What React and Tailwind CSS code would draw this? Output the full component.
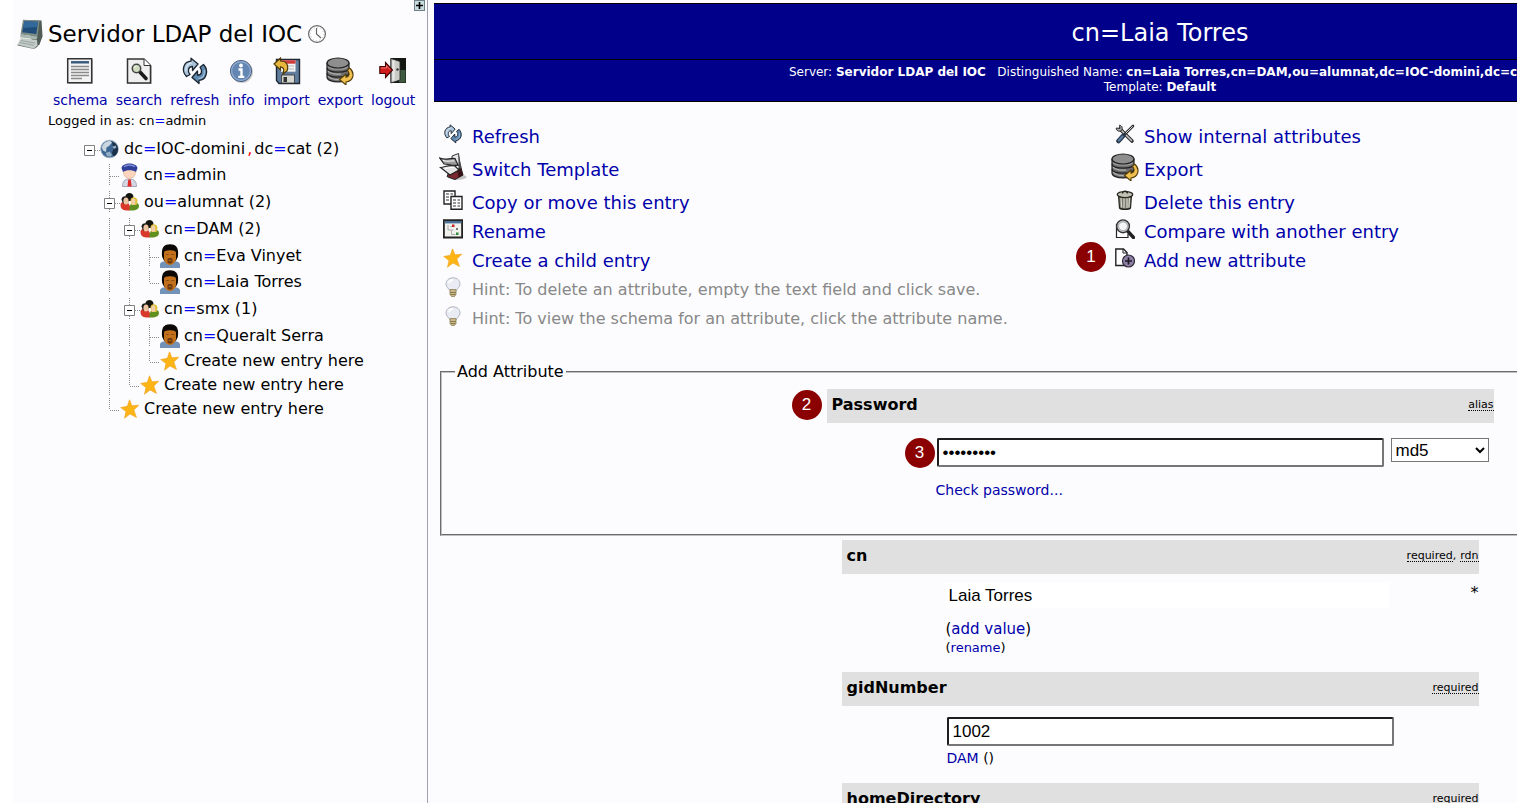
import { Fragment } from 'react';

const FONT = "font-['DejaVu_Sans',Verdana,sans-serif]";
const LINK = 'text-[#0000aa] hover:text-[#0066cc]';

/* ---------- icons ---------- */

const ComputerIcon = () => (
  <svg viewBox="0 0 26 30" className="w-[26px] h-[30px] shrink-0">
    <path d="M8 1 24.500 1.500l1 16-3 8-5 4z" fill="#505c56" />
    <path d="M6 .8 22.500 1.500 20.500 17.500 3.500 15.500z" fill="#7d8c86" />
    <path d="M7.300 2.200 21 2.800 19.300 15 5.200 13.300z" fill="#1f4c78" />
    <path d="M7.300 2.200 21 2.800 20.300 8 6.300 9z" fill="#33689a" />
    <path d="M3.500 15.500 20.500 17.500 19.500 20.500 3 18.300z" fill="#a9b5af" />
    <path d="M4 19 20 21 20.500 26.500 17 29.500 .5 25.500z" fill="#c3ccc8" />
    <path d="M.5 25.500 17 29.500 20.500 26.500v1.200L17 30 .5 26.500z" fill="#69766f" />
    <path d="M3.500 21.500 18 24M2.500 23.500l14.500 2.800" stroke="#8f9a95" strokeWidth=".8" />
  </svg>
);

const ClockIcon = () => (
  <svg viewBox="0 0 20 20" className="w-5 h-5" fill="none">
    <circle cx="10" cy="10" r="8.400" fill="#fff" stroke="#666" strokeWidth="1.200" />
    <circle cx="10" cy="10" r="6.600" stroke="#bbb" strokeWidth="1" strokeDasharray="1 2.450" />
    <path d="M9.500 4v6l4.500 4" stroke="#666" strokeWidth="1.200" />
  </svg>
);

const SchemaIcon = () => (
  <svg viewBox="0 0 28 28" className="w-7 h-7">
    <path d="M3 3h24v24H3z" fill="#ccc" />
    <path d="M1.700 1.700h24v24h-24z" fill="#f3f3f3" stroke="#333" strokeWidth="1.500" />
    <path d="M5 5.300h18" stroke="#37597b" strokeWidth="2.400" />
    <path d="M5 9.500h18M5 12.500h18M5 15.500h18M5 18.500h18M5 21.500h11" stroke="#8a8a8a" strokeWidth="1.300" />
  </svg>
);

const SearchIcon = () => (
  <svg viewBox="0 0 28 28" className="w-7 h-7">
    <path d="M4 3h17l6 6v18H4z" fill="#ccc" />
    <path d="M2.500 2h16.500l6.500 6.500V26h-23z" fill="#efefef" stroke="#333" strokeWidth="1.500" />
    <path d="M19 2v6.500h6.500" fill="#fff" stroke="#333" />
    <path d="m14.500 14.500 6.500 7" stroke="#1a1a1a" strokeWidth="3.600" strokeLinecap="round" />
    <circle cx="11.500" cy="11.500" r="4.200" fill="#d0dcc0" stroke="#444" strokeWidth="1.500" />
    <path d="M9.500 11c.2-1.300 1-1.800 2-1.800" stroke="#fff" fill="none" />
  </svg>
);

// two arrows chasing each other, the left one points right and up top
const RefreshIcon = ({ className = 'w-7 h-7' }) => (
  <svg viewBox="0 0 28 28" className={className}>
    <g stroke="#1b2530" strokeWidth="1.300" strokeLinejoin="round">
      <path
        d="M5.500 19.500C-.5 13 3 4.500 10 4.200V1.200l7 5.800-5.500 6.500V9.500c-4 0-5.500 4-2.500 8z"
        fill="#a9c3db"
      />
      <path
        d="M22.500 7.500C28.500 14 25 23 18 23.300v3.200L11 20.500l5.500-6.500v4.200c4 0 5.500-4 2.500-8z"
        fill="#5f89b0"
      />
    </g>
    <path d="M4.800 14.500c-.5-5 2.500-8.500 6-8.700" fill="none" stroke="#dbe7f1" strokeWidth="1.200" />
    <path d="M23.300 13c.5 5-1.500 8.200-5.800 8.700" fill="none" stroke="#9dbbd6" strokeWidth="1.200" />
  </svg>
);

const InfoIcon = () => (
  <svg viewBox="0 0 28 28" className="w-7 h-7">
    <circle cx="15" cy="15" r="11" fill="#ccc" />
    <circle cx="14" cy="14" r="10.600" fill="#6486b3" stroke="#4d6385" />
    <circle cx="14" cy="14" r="9.400" fill="none" stroke="#94aed0" strokeWidth="1.200" />
    <circle cx="14" cy="8.500" r="1.900" fill="#fff" />
    <path d="M11.500 12.500h3v7M11.300 19.800h6" stroke="#fff" strokeWidth="2.300" fill="none" />
  </svg>
);

const ImportIcon = () => (
  <svg viewBox="0 0 28 28" className="w-7 h-7">
    <path d="M3.500 2.500h23v24H6l-2.500-3z" fill="#607d9d" stroke="#1c2733" strokeWidth="1.400" />
    <path d="M8 3.200h14.500v11.500H8z" fill="#f5f5f5" />
    <path d="M8 3.200h14.500v3.500H8z" fill="#cf3b3b" />
    <path d="M10 9h11M10 12h11" stroke="#b5b5b5" />
    <path d="M8.500 18h13v8h-13z" fill="#d6d6d0" stroke="#333" strokeWidth=".8" />
    <path d="M10.500 20h3.500v5h-3.500z" fill="#333" />
    <path
      d="M1 7 7.500 1v3c6 0 8.500 4 6.500 10l-4 3c1.500-4.500.5-7-2.500-7.200V13z"
      fill="#e8b63c"
      stroke="#4d3a09"
      strokeWidth="1.200"
    />
  </svg>
);

const ExportIcon = () => (
  <svg viewBox="0 0 28 28" className="w-7 h-7">
    <path d="M1 6v14c0 6.500 22 6.500 22 0V6z" fill="#6f6f6f" stroke="#222" strokeWidth="1.200" />
    <path d="M2 9.500c3 3.500 17 3.500 20 0" fill="none" stroke="#9a9a9a" strokeWidth="1.200" />
    <path d="M1 11c0 5.500 22 5.500 22 0M1 16c0 5.500 22 5.500 22 0" fill="none" stroke="#222" strokeWidth="1.200" />
    <path d="M2 14c2 3 10 3.500 13 3M2 19c2 3 8 3.800 11 3.500" fill="none" stroke="#b0b0b0" strokeWidth="1.200" />
    <ellipse cx="12" cy="6" rx="11" ry="5" fill="#8e8e8e" stroke="#222" strokeWidth="1.200" />
    <path
      d="M23.500 11c6 5 4 13-3.500 14V28l-6.500-5.500L20 17v3.300c3.500-.5 4-4 1.500-7z"
      fill="#f0c14f"
      stroke="#543e09"
      strokeWidth="1.100"
    />
  </svg>
);

const LogoutIcon = () => (
  <svg viewBox="0 0 28 28" className="w-7 h-7">
    <path d="M11.500 1H27v25H11.500z" fill="#131813" />
    <path d="M20 13h6.500v12.500H20z" fill="#3f5a40" />
    <path d="M12 1.500 21 4.500v18.500l-9 3z" fill="#c9cbc7" stroke="#222" strokeWidth=".8" />
    <path d="M14.500 3.500v20" stroke="#e9e9e9" strokeWidth="2.200" />
    <circle cx="18.500" cy="12.500" r="1.200" fill="#333" />
    <path d="M.8 9.500h5.700V5.500l7 7.500-7 7.500v-4H.8z" fill="#cf1c1c" stroke="#420606" strokeWidth="1.100" />
    <path d="M2 11h5.500V8.500l3.500 4" stroke="#f07070" fill="none" />
  </svg>
);

const TemplateIcon = () => (
  <svg viewBox="0 0 28 28" className="w-7 h-7">
    <ellipse cx="18" cy="24" rx="9.500" ry="3" fill="#c4c4c4" />
    <path d="m10 19 12-4 2 7-8 4.500-8-3z" fill="#7d2730" stroke="#222" />
    <path d="m18 17 4-2 2 7-4.500 2.500z" fill="#3a1418" />
    <path d="m13 3 6.500-2.500L21 12l-8 1.500z" fill="#e8e8e8" stroke="#333" />
    <path d="M19.500.5 22 12l1 4-3.500-1z" fill="#4a4a4a" />
    <path d="M.8 5c6 2.500 9 0 15.200.5l3 6.500c-5 1.500-9-1-14-1z" fill="#999" stroke="#222" strokeWidth="1.200" />
    <path d="M1.500 14.500c5-.5 8-3 14.500-1.500l4 4-9 5z" fill="#e5e5e5" stroke="#222" strokeWidth="1.200" />
    <path d="M4 7.500c5 1.500 8 0 11.500.5M6 15.500c4-.5 6-1.500 9-1" stroke="#fff" fill="none" />
  </svg>
);

const CopyIcon = () => (
  <svg viewBox="0 0 20 20" className="w-5 h-5">
    <path d="M1 1h11v13H1z" fill="#fff" stroke="#222" strokeWidth="1.400" />
    <path d="M3 4h3M7.500 4H10M3 7h3M3 10h3" stroke="#333" strokeWidth="1.200" />
    <path d="M8 6.500h11v12.800H8z" fill="#fff" stroke="#222" strokeWidth="1.400" />
    <path d="M10 10h3M14.500 10H17M10 13h3M14.500 13H17M10 16h3M14.500 16H17" stroke="#333" strokeWidth="1.200" />
  </svg>
);

const RenameIcon = () => (
  <svg viewBox="0 0 20 20" className="w-5 h-5">
    <path d="M.9 1.200h18.200v17.300H.9z" fill="#f1f1ee" stroke="#222" strokeWidth="1.800" />
    <path d="M1.800 2h16.400v2.400H1.800z" fill="#4d7297" />
    <path d="M5 6v5h5.500M7.500 7.500h3M8.500 11.500v4h4" stroke="#aaa" fill="none" />
    <path d="M9 5.500h2.500V8H9z" fill="#cc2222" />
    <path d="M13 13.500h2.500V16H13z" fill="#2e8b38" />
    <path d="M13 9h2v2h-2z" fill="#777" />
  </svg>
);

const StarIcon = () => (
  <svg viewBox="0 0 20 20" className="w-5 h-5">
    <path
      d="m9.500.8 2.500 6 6.800-.6-5 4.800 2.700 7.500-6.500-3.500-5.500 4.300 1.500-6.800L.7 8.500l6.600-1.200z"
      fill="#fdb515"
      stroke="#f0a020"
      strokeWidth=".6"
    />
  </svg>
);

const BulbIcon = () => (
  <svg viewBox="0 0 20 20" className="w-5 h-5">
    <path
      d="M10 .8C5.500.8 3 3.800 3 7c0 3 3 4.500 3.800 7h6.400C14 11.500 17 10 17 7c0-3.200-2.500-6.200-7-6.200z"
      fill="#e9ecf2"
      stroke="#b3b6c0"
    />
    <path d="M6 6c.5-2 2-3.200 4-3.200" stroke="#fff" strokeWidth="1.800" fill="none" />
    <path d="M7 12.500h6v5L11.500 19.500h-3L7 17.500z" fill="#c9b98a" stroke="#8f8158" strokeWidth=".8" />
    <path d="M7 15.500h6M7.500 17.500h5" stroke="#857547" strokeWidth=".9" />
  </svg>
);

const ToolsIcon = () => (
  <svg viewBox="0 0 20 20" className="w-5 h-5" strokeLinecap="round">
    <path d="M5 5 17 17" stroke="#2b2b2b" strokeWidth="3.600" />
    <path d="M5 5 16.500 16.500" stroke="#c4c4c4" strokeWidth="1.600" />
    <path d="M1.200 4.500C1.500 7 4 8 6.500 6.500 8 4 7 1.500 4.500 1.200L5 4z" fill="#aaa" stroke="#2b2b2b" />
    <path d="M18 2 9.500 10.500" stroke="#2b2b2b" strokeWidth="2.600" />
    <path d="M17.500 2.500 11 9" stroke="#ddd" strokeWidth="1" />
    <path d="M8 12 3.500 17" stroke="#26384c" strokeWidth="4.600" />
    <path d="M7.500 12.500 3.800 16.500" stroke="#5b7ea3" strokeWidth="2.200" />
  </svg>
);

const TrashIcon = () => (
  <svg viewBox="0 0 20 20" className="w-5 h-5">
    <path d="m3.500 5 1 13c1.500 1.800 9.500 1.800 11 0l1-13z" fill="#7a7a70" stroke="#24241f" strokeWidth="1.200" />
    <path d="m6 8 .6 9.500M9 8.500V18M12 8.500V18M14.500 8l-.6 9.500" stroke="#d3d3c8" strokeWidth="1.300" />
    <ellipse cx="10" cy="4.500" rx="7.800" ry="3" fill="#c2c2b4" stroke="#24241f" strokeWidth="1.200" />
    <path d="M7.500 3.600c0-3.200 5-3.200 5 0" fill="none" stroke="#24241f" strokeWidth="1.400" />
  </svg>
);

const CompareIcon = () => (
  <svg viewBox="0 0 20 20" className="w-5 h-5">
    <path d="M1.500 5v13.500h11.500V15" fill="#fff" stroke="#222" strokeWidth="1.200" />
    <path d="m13 12.500 5.500 6" stroke="#222" strokeWidth="3.400" strokeLinecap="round" />
    <circle cx="8" cy="7.300" r="6.400" fill="#c9cdd0" stroke="#333" strokeWidth="1.400" />
    <circle cx="8" cy="7.300" r="4.400" fill="#f5f6f7" stroke="#999" strokeWidth=".8" />
  </svg>
);

const AddAttrIcon = () => (
  <svg viewBox="0 0 20 20" className="w-5 h-5">
    <path d="M.8 1h7.700L12 4.500v13H.8z" fill="#fff" stroke="#222" strokeWidth="1.400" />
    <path d="M8 1v4h4" fill="none" stroke="#222" />
    <circle cx="13.500" cy="13" r="6" fill="#8d7fa5" stroke="#2f2a38" strokeWidth="1.200" />
    <path d="M13.500 9.500v7M10 13h7" stroke="#1c1822" strokeWidth="1.700" />
  </svg>
);

const GlobeIcon = () => (
  <svg viewBox="0 0 20 20" className="w-5 h-5">
    <circle cx="9.500" cy="10" r="8.800" fill="#3c6593" stroke="#a5b3c2" />
    <path d="M2 9c0-4 4-7 8-7.200l2 2L9 7l-2.500 1.500L6 13l-3-1.500z" fill="#c8d6df" />
    <path d="M12 3c4 1 6 4 6 7.500s-2 6-4.500 7L12 14l1.500-4z" fill="#1b3049" />
    <path d="m12.500 7.500 3-1 1 2-2.500 1.500zM5.500 14l4-1.500 2.500 3-1.500 2.300-3.500-.8z" fill="#93adc2" />
  </svg>
);

const AdminIcon = () => (
  <svg viewBox="0 0 20 24" className="w-5 h-6">
    <path d="M2.500 23.500c0-5 2-7.500 7-7.500s7 2.500 7 7.500z" fill="#d4d6e4" stroke="#a5a8bd" />
    <path d="M8.300 16.500h2.400l1 7H7.500z" fill="#e02b2b" />
    <circle cx="9.500" cy="9.500" r="6" fill="#fbd5bd" stroke="#e0b196" strokeWidth=".7" />
    <path d="M1.500 5c1-6 15-6 16 0L16 9c-3-2.500-10-2.500-13 0z" fill="#303f9a" />
    <path d="M4 3.800c3-2.500 8-2.500 11 0" stroke="#7d8ed4" strokeWidth="1.400" fill="none" />
  </svg>
);

const GroupIcon = () => (
  <svg viewBox="0 0 20 20" className="w-5 h-5">
    <path d="M5.500 5c-.5-5 8-5.500 8 0l-2 4h-5z" fill="#15150f" />
    <path d="M.5 13c0-3 3-3.500 5.500-3s5 4 4 8.500C5 19 .5 18 .5 13z" fill="#d8392b" />
    <path d="M9.500 18.500c0-5 1-7.500 4-8s5.500 1 5.500 3.500c0 3-3 5-9.500 4.500z" fill="#5f8f1e" />
    <path d="M1.500 7.500c0-4.500 7-4.500 7.500 0l-1 4h-5z" fill="#1b1b1b" />
    <ellipse cx="6" cy="9" rx="2.600" ry="3.500" fill="#eec5a2" />
    <path d="M10.500 8.500c0-4.500 7-4.500 7 .5l-1 4h-5z" fill="#e0c23a" />
    <ellipse cx="13.300" cy="9.800" rx="2" ry="3.200" fill="#f2cfae" />
  </svg>
);

const PersonIcon = () => (
  <svg viewBox="0 0 20 24" className="w-5 h-6">
    <path d="M0 24v-4c1-2.500 4-2.500 6-3h8c2 .5 5 .5 6 3v4z" fill="#7392b8" />
    <path d="M2.200 13C1 5 3 .3 10 .3S19 5 17.800 13l-2 4H4.200z" fill="#0c0805" />
    <path d="M4 8.500c0-3 12-3 12 0v6c0 3.500-3 6.500-6 6.500s-6-3-6-6.500z" fill="#c2701b" />
    <path d="M7.500 15c0-1.200 5-1.200 5 0v3.500c-1 1.500-4 1.500-5 0z" fill="#6b3a10" />
    <path d="M8.800 16.500h2.400" stroke="#b3651a" strokeWidth="1.200" />
    <path d="M5.800 10.500h3M11.200 10.500h3" stroke="#8a4d14" />
  </svg>
);

/* ---------- tree ---------- */

const DASH = { stroke: '#888', strokeWidth: 1, strokeDasharray: '1 1', fill: 'none' };

// one 20px wide column of the tree: blank, line, tee, elbow, or a collapse box
const Branch = ({ type }) => (
  <svg viewBox="0 0 20 22" className="w-5 h-[22px] shrink-0">
    {(type === 'line' || type === 'tee' || type === 'box') && <path d="M9.500 0v22" {...DASH} />}
    {type === 'elbow' && <path d="M9.500 0v12" {...DASH} />}
    {(type === 'tee' || type === 'elbow') && <path d="M10 12.500h9" {...DASH} />}
    {(type === 'box' || type === 'root') && (
      <>
        <path d="M15 12.500h5" {...DASH} />
        <path d="M4.500 7.500h10v10h-10z" fill="#fff" stroke="#808080" />
        <path d="M7 12.500h5" stroke="#000" />
      </>
    )}
  </svg>
);

const tree = [
  { cols: ['root'], icon: GlobeIcon, dn: [['dc', 'IOC-domini'], ['dc', 'cat']], count: 2, h: 'h-[27px]' },
  { cols: ['blank', 'tee'], icon: AdminIcon, dn: [['cn', 'admin']], h: 'h-[26px]' },
  { cols: ['blank', 'box'], icon: GroupIcon, dn: [['ou', 'alumnat']], count: 2, h: 'h-[27px]' },
  { cols: ['blank', 'line', 'box'], icon: GroupIcon, dn: [['cn', 'DAM']], count: 2, h: 'h-[27px]' },
  { cols: ['blank', 'line', 'line', 'tee'], icon: PersonIcon, dn: [['cn', 'Eva Vinyet']], h: 'h-[27px]' },
  { cols: ['blank', 'line', 'line', 'elbow'], icon: PersonIcon, dn: [['cn', 'Laia Torres']], h: 'h-[26px]' },
  { cols: ['blank', 'line', 'box'], icon: GroupIcon, dn: [['cn', 'smx']], count: 1, h: 'h-[27px]' },
  { cols: ['blank', 'line', 'line', 'tee'], icon: PersonIcon, dn: [['cn', 'Queralt Serra']], h: 'h-[27px]' },
  { cols: ['blank', 'line', 'line', 'elbow'], icon: StarIcon, h: 'h-6' },
  { cols: ['blank', 'line', 'elbow'], icon: StarIcon, h: 'h-6' },
  { cols: ['blank', 'elbow'], icon: StarIcon, h: 'h-6' },
];

const TreeRow = ({ cols, icon: Icon, dn, count, h }) => (
  <li className={`flex items-center ${h}`}>
    {cols.map((type, i) => (
      <Branch key={i} type={type} />
    ))}
    <Icon />
    <a href="#" className="ml-1 text-base leading-5 whitespace-nowrap">
      {dn
        ? dn.map(([attr, value], i) => (
            <Fragment key={i}>
              {i > 0 && <span className="text-[#ff0000] mx-[2px]">,</span>}
              {attr}
              <span className="text-[#0000ff]">=</span>
              {value}
            </Fragment>
          ))
        : 'Create new entry here'}
      {count && ` (${count})`}
    </a>
  </li>
);

/* ---------- sidebar ---------- */

const tools = [
  ['schema', SchemaIcon],
  ['search', SearchIcon],
  ['refresh', RefreshIcon],
  ['info', InfoIcon],
  ['import', ImportIcon],
  ['export', ExportIcon],
  ['logout', LogoutIcon],
];

const Sidebar = () => (
  <aside className="relative w-[415px] shrink-0 border-r border-[#a0a0b4]">
    <button
      aria-label="Expand"
      className="absolute top-0 right-[2px] w-[11px] h-[11px] bg-[#c8dce0] border border-[#6f7f86] flex items-center justify-center"
    >
      <svg viewBox="0 0 9 9" className="w-[9px] h-[9px]">
        <path d="M4.500 1v7M1 4.500h7" stroke="#000" strokeWidth="1.600" />
      </svg>
    </button>
    <div className="flex items-center gap-[5px] pl-1 pt-[19px]">
      <ComputerIcon />
      <h1 className="text-[23px] leading-[30px] whitespace-nowrap">Servidor LDAP del IOC</h1>
      <ClockIcon />
    </div>
    <nav className="flex gap-2 pl-10 mt-2">
      {tools.map(([name, Icon]) => (
        <a key={name} href="#" className={`flex flex-col items-center gap-[5px] text-sm leading-5 ${LINK}`}>
          <Icon />
          {name}
        </a>
      ))}
    </nav>
    <p className="pl-[35px] text-[13px] leading-5 pt-[1px]">
      Logged in as: cn<span className="text-[#0000ff]">=</span>admin
    </p>
    <ul className="pl-[67px] pt-1">
      {tree.map((row, i) => (
        <TreeRow key={i} {...row} />
      ))}
    </ul>
  </aside>
);

/* ---------- main panel ---------- */

const Badge = ({ n, className }) => (
  <span
    className={`absolute w-[30px] h-[30px] rounded-full bg-[#8b0000] text-white text-[17px] flex items-center justify-center font-['Liberation_Sans',sans-serif] ${className}`}
  >
    {n}
  </span>
);

const SmallRefresh = () => <RefreshIcon className="w-5 h-5" />;

const actions = [
  [{ icon: SmallRefresh, text: 'Refresh' }, { icon: ToolsIcon, text: 'Show internal attributes' }],
  [{ icon: TemplateIcon, text: 'Switch Template' }, { icon: ExportIcon, text: 'Export' }],
  [{ icon: CopyIcon, text: 'Copy or move this entry' }, { icon: TrashIcon, text: 'Delete this entry' }],
  [{ icon: RenameIcon, text: 'Rename' }, { icon: CompareIcon, text: 'Compare with another entry' }],
  [{ icon: StarIcon, text: 'Create a child entry' }, { icon: AddAttrIcon, text: 'Add new attribute', badge: 1 }],
];

const hints = [
  'Hint: To delete an attribute, empty the text field and click save.',
  'Hint: To view the schema for an attribute, click the attribute name.',
];

const Action = ({ icon: Icon, text, badge }) => (
  <div className="relative flex items-center flex-1">
    {badge && <Badge n={badge} className="-left-[34px] top-[-4px]" />}
    <span className="w-[30px] mr-1 flex justify-center pb-[5px]">
      <Icon />
    </span>
    <a href="#" className={`text-lg leading-[29px] whitespace-nowrap ${LINK}`}>
      {text}
    </a>
  </div>
);

const Note = ({ children }) => (
  <abbr className="no-underline border-b border-dotted border-black leading-none">{children}</abbr>
);

const AttrHeader = ({ name, notes, htmlFor }) => (
  <div className="flex items-center justify-between bg-[#e0e0e0] h-[34px] pl-[5px] pb-[2px]">
    <label htmlFor={htmlFor} className="text-base leading-5 font-bold">
      {name}
    </label>
    <span className="text-[11px] flex">
      {notes.map((note, i) => (
        <Fragment key={note}>
          {i > 0 && <span className="leading-none mr-1">,</span>}
          <Note>{note}</Note>
        </Fragment>
      ))}
    </span>
  </div>
);

const INPUT =
  "w-[447px] h-[29px] px-1 bg-white text-[17px] font-['Liberation_Sans',Arial,sans-serif] border-2 border-t-[#1e1e1e] border-l-[#1e1e1e] border-b-[#767676] border-r-[#767676] rounded-[2px]";

const PasswordBox = () => (
  <fieldset className="mx-[6px] pb-[34px] border-2 [border-style:groove] border-[#c0c0c0]">
    <legend className="ml-[13px] px-[2px] text-base leading-5">Add Attribute</legend>
    <div className="relative w-[667px] mx-auto mt-[7px]">
      <Badge n={2} className="-left-[35px] top-[1px]" />
      <AttrHeader name="Password" notes={['alias']} htmlFor="password" />
      <div className="relative flex items-start pl-[110px] pt-[15px] gap-[7px]">
        <Badge n={3} className="left-[78px] top-[15px]" />
        <input id="password" type="password" defaultValue="secret123" className={INPUT} />
        <select
          aria-label="Encryption"
          defaultValue="md5"
          className="w-[98px] h-6 bg-white text-[17px] leading-5 font-['Liberation_Sans',Arial,sans-serif] border border-[#767676]"
        >
          <option>md5</option>
        </select>
      </div>
      <a href="#" className={`block pl-[109px] mt-[13px] text-sm leading-5 ${LINK}`}>
        Check password...
      </a>
    </div>
  </fieldset>
);

const EntryForm = () => (
  <form className="w-[637px] mx-auto mt-1">
    <AttrHeader name="cn" notes={['required', 'rdn']} htmlFor="cn" />
    <div className="pl-[104px] pt-[9px] pb-4">
      <div className="flex justify-between items-start">
        <input
          id="cn"
          readOnly
          defaultValue="Laia Torres"
          className="w-[443px] h-[25px] px-[3px] bg-white text-[17px] font-['Liberation_Sans',Arial,sans-serif]"
        />
        <span className="text-base leading-5">*</span>
      </div>
      <p className="mt-[11px] text-[15px] leading-5">
        (<a href="#" className={LINK}>add value</a>)
      </p>
      <p className="text-[13px] leading-[17px]">
        (<a href="#" className={LINK}>rename</a>)
      </p>
    </div>
    <AttrHeader name="gidNumber" notes={['required']} htmlFor="gid" />
    <div className="pl-[105px] pt-[11px] pb-4">
      <input id="gid" defaultValue="1002" className={`block ${INPUT}`} />
      <p className="mt-[3px] text-sm leading-[18px]">
        <a href="#" className={LINK}>DAM</a> ()
      </p>
    </div>
    <AttrHeader name="homeDirectory" notes={['required']} htmlFor="home" />
    <div className="pl-[105px] pt-[11px]">
      <input id="home" defaultValue="" className={`block ${INPUT}`} />
    </div>
  </form>
);

const App = () => (
  <div className={`flex h-screen overflow-hidden bg-[#fcfcfe] border-l-[13px] border-white text-black ${FONT}`}>
    <Sidebar />
    <main className="flex-1 min-w-0 overflow-hidden pl-[6px] pt-[3px]">
      <div className="min-w-[1452px]">
        <header className="bg-[#00008b] text-white text-center border-y border-black">
          <h2 className="text-2xl leading-[51px] pt-1 border-b border-black">cn=Laia Torres</h2>
          <p className="text-xs leading-[15px] pt-[5px] pb-[6px]">
            Server: <b>Servidor LDAP del IOC</b> &nbsp; Distinguished Name:{' '}
            <b>cn=Laia Torres,cn=DAM,ou=alumnat,dc=IOC-domini,dc=cat</b>
            <br />
            Template: <b>Default</b>
          </p>
        </header>
        <section className="pl-1 pt-5 pb-[29px] w-[1348px]">
          {actions.map(([left, right]) => (
            <div key={left.text} className={`flex ${left.icon === TemplateIcon ? 'h-[37px]' : 'h-[29px]'}`}>
              <Action {...left} />
              <Action {...right} />
            </div>
          ))}
          {hints.map((hint) => (
            <div key={hint} className="flex items-center h-[29px]">
              <span className="w-[30px] mr-1 flex justify-center pb-[5px]">
                <BulbIcon />
              </span>
              <p className="text-base leading-[29px] text-[#888]">{hint}</p>
            </div>
          ))}
        </section>
        <PasswordBox />
        <EntryForm />
      </div>
    </main>
  </div>
);

export default App;
